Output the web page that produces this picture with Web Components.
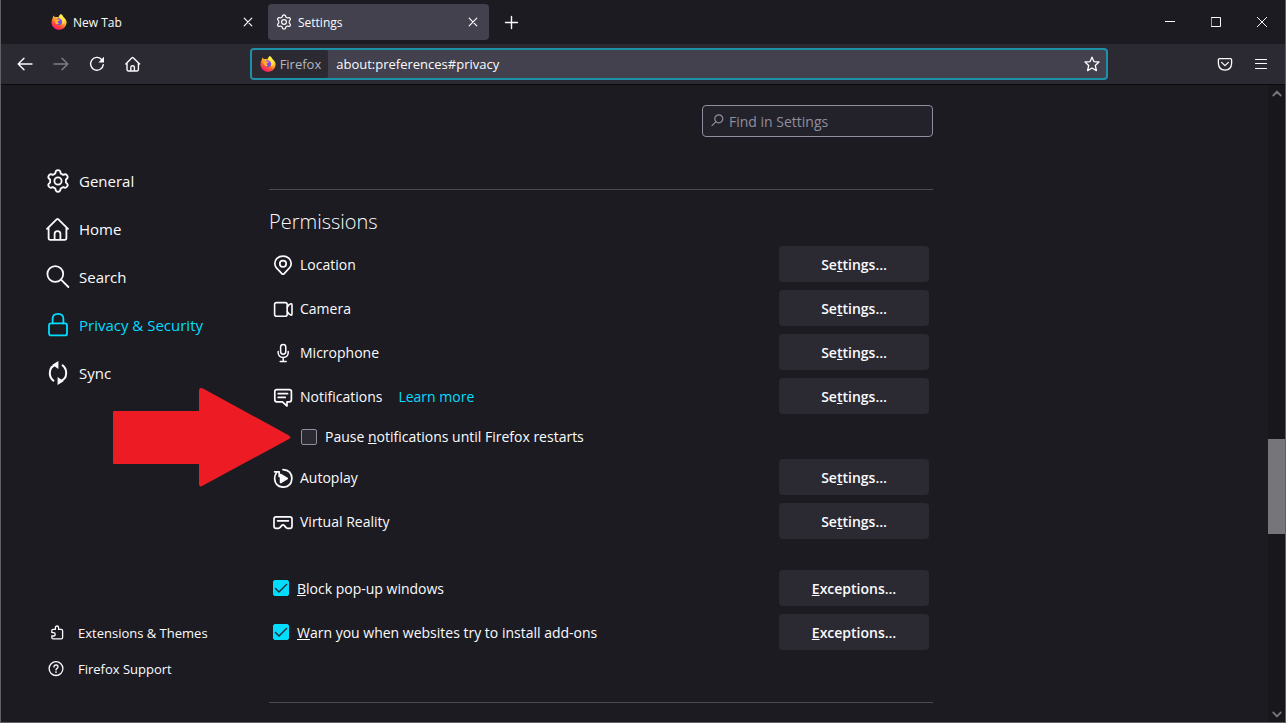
<!DOCTYPE html>
<html lang="en">
<head>
<meta charset="utf-8">
<title>Settings</title>
<style>
    html, body {
        height: 100%;
        margin: 0;
    }

    body {
        --bg: #1c1b22;
        --toolbar: #2b2a33;
        --raised: #42414d;
        --text: #fbfbfe;
        --accent: #00ddff;
        --line: #4b4a53;
        background: var(--bg);
        color: var(--text);
        font-family: "Open Sans", "Noto Sans", sans-serif;
        font-size: 14px;
        overflow: hidden;
    }
</style>
</head>
<body>
<browser-window>
    <tab-strip slot="tabs">
        <browser-tab icon="firefox">New Tab</browser-tab>
        <browser-tab icon="gear" selected>Settings</browser-tab>
    </tab-strip>
    <nav-toolbar slot="toolbar"></nav-toolbar>

    <settings-nav>
        <nav-item icon="gear">General</nav-item>
        <nav-item icon="home">Home</nav-item>
        <nav-item icon="search">Search</nav-item>
        <nav-item icon="lock" selected>Privacy &amp; Security</nav-item>
        <nav-item icon="sync">Sync</nav-item>
        <nav-item slot="footer" icon="puzzle" small>Extensions &amp; Themes</nav-item>
        <nav-item slot="footer" icon="help" small>Firefox Support</nav-item>
    </settings-nav>

    <settings-pane>
        <settings-group heading="Permissions">
            <permission-row icon="location">Location<span slot="action">Se<u>t</u>tings…</span></permission-row>
            <permission-row icon="camera">Camera<span slot="action">Se<u>t</u>tings…</span></permission-row>
            <permission-row icon="mic">Microphone<span slot="action">Se<u>t</u>tings…</span></permission-row>
            <permission-row icon="message" link="Learn more">Notifications<span slot="action">Se<u>t</u>tings…</span></permission-row>
            <check-row indent>
                <callout-arrow slot="callout"></callout-arrow>
                Pause <u>n</u>otifications until Firefox restarts
            </check-row>
            <permission-row icon="autoplay">Autoplay<span slot="action">Se<u>t</u>tings…</span></permission-row>
            <permission-row icon="vr">Virtual Reality<span slot="action">Se<u>t</u>tings…</span></permission-row>
        </settings-group>
        <settings-group>
            <check-row checked><u>B</u>lock pop-up windows<span slot="action"><u>E</u>xceptions…</span></check-row>
            <check-row checked><u>W</u>arn you when websites try to install add-ons<span slot="action"><u>E</u>xceptions…</span></check-row>
        </settings-group>
    </settings-pane>

    <page-scrollbar slot="scrollbar"></page-scrollbar>
</browser-window>

<script>
// Icons: [viewBox size, stroke width, markup]
const ICONS = {
    gear: [24, 1.8, '<path d="M9.3 4.5Q9.5 1.2 12 1.2Q14.5 1.2 14.7 4.5L17.1 5.9Q20 4.4 21.3 6.6Q22.6 8.8 19.9 10.6V13.4Q22.6 15.2 21.3 17.4Q20 19.6 17.1 18.1L14.7 19.5Q14.5 22.8 12 22.8Q9.5 22.8 9.3 19.5L6.9 18.1Q4 19.6 2.7 17.4Q1.4 15.2 4.1 13.4V10.6Q1.4 8.8 2.7 6.6Q4 4.4 6.9 5.9Z"/><circle cx="12" cy="12" r="3.6"/>'],
    home: [24, 1.8, '<path d="M1 11.8 10.6 2.3Q11.5 1.5 12.4 2.3L22 11.8M2.6 10.5V21Q2.6 22.8 4.4 22.8H18.6Q20.4 22.8 20.4 21V10.5M8.6 22.5V17Q8.6 14.2 11.5 14.2Q14.4 14.2 14.4 17V22.5"/>'],
    search: [24, 1.8, '<circle cx="9.3" cy="9" r="7.9"/><path d="M15 14.6 22.4 22"/>'],
    lock: [24, 1.8, '<rect x="3" y="10.400" width="18" height="12" rx="2"/><path d="M6.600 10.400V6Q6.600 .9 12 .9Q17.400 .9 17.400 6V10.400"/>'],
    sync: [24, 2, '<path d="M7.400 19.600Q3.800 16.800 3.800 12Q3.800 5 11 3.600M16.600 4.400Q20.200 7.200 20.200 12Q20.200 19 13 20.400"/><path fill="currentColor" stroke="none" d="M12.400 0V8L6.400 3.800ZM11.600 24V16L17.600 20.200Z"/>'],
    puzzle: [16, 1.3, '<path d="M5 4.400H7.400V2.800Q7.400 1 9 1Q10.600 1 10.600 2.800V4.400H13.200Q14.600 4.400 14.600 5.800V12.400Q14.600 13.800 13.200 13.800H5.200Q3.800 13.800 3.800 12.600V11H5.600Q7.200 11 7.200 9.200Q7.200 7.600 5.600 7.600H3.800V5.600Q3.800 4.400 5 4.400Z"/>'],
    help: [16, 1.3, '<circle cx="8" cy="7.600" r="6.900"/><path d="M6 6Q6 4 8 4Q10 4 10 5.800Q10 6.800 9 7.400Q8 8 8 9"/><circle cx="8" cy="11.100" r=".9" fill="currentColor" stroke="none"/>'],
    location: [20, 1.7, '<path d="M10 19.2Q9.2 19.2 8.6 18.4L3.4 12.8Q1.8 11 1.8 8.6Q1.8 5.4 4 3.3Q6.4 1.1 10 1.1Q13.6 1.1 16 3.3Q18.2 5.4 18.2 8.6Q18.2 11 16.6 12.8L11.4 18.4Q10.8 19.2 10 19.2Z"/><circle cx="10" cy="8.8" r="3.2"/>'],
    camera: [20, 1.6, '<rect x="1.6" y="3.6" width="12.6" height="13.6" rx="2"/><path d="M14.2 8.2 16.2 5.6Q18.9 3.6 19 6V15Q18.9 17.2 16.2 15.2L14.2 12.6"/>'],
    mic: [20, 1.5, '<rect x="7.6" y="1.6" width="5.2" height="9.6" rx="2.6"/><path d="M5.2 8.6V10Q5.6 14.4 10.2 14.4Q14.8 14.4 15.2 10V8.6M10.2 14.6V18.2M7.200 18.400H13.200"/>'],
    message: [20, 1.7, '<path d="M3.8 2.6H16.4Q18.4 2.6 18.4 4.6V12.8Q18.4 14.8 16.4 14.8H14V19L9.4 14.8H3.8Q1.8 14.8 1.8 12.8V4.6Q1.8 2.6 3.8 2.6Z"/><path d="M5.2 6.7H14.600M5.2 10.4H12.2"/>'],
    autoplay: [20, 1.7, '<path d="M10 1.6Q18.7 2.2 18.9 10.6Q18.3 18.8 10.2 19.2Q2 18.8 1.6 10.4Q1.6 7.4 3.4 5M1.6 3.8 6.2 3.8V8.4"/><path fill="currentColor" d="M7.6 6.6V14.4L14.2 10.5Z"/>'],
    vr: [20, 1.7, '<path d="M3.2 4.8H16.8Q19 4.8 19 7V14.2Q19 16.4 16.8 16.4H14.6Q13.6 16.4 13 15.6L11.4 13.6Q10 12.2 8.6 13.6L7 15.6Q6.4 16.4 5.4 16.4H3.2Q1 16.4 1 14.2V7Q1 4.8 3.2 4.8ZM4.6 8.8H15.4"/>'],
    back: [16, 1.4, '<path d="M15 8H1.2M7 2.2 1.2 8 7 13.8"/>'],
    forward: [16, 1.4, '<path d="M1 8H14.8M9 2.2 14.8 8 9 13.8"/>'],
    reload: [16, 1.4, '<path d="M14.3 8.6A6.4 6.4 0 1 1 12.6 3.4L14 4.8"/><path fill="currentColor" stroke="none" d="M15 .8V6.4H9.4Z"/>'],
    house: [16, 1.4, '<path d="M.8 8 7 1.700Q7.600 1.200 8.200 1.700L14.600 8M2 7V13.600Q2 15 3.200 15H12.200Q13.400 15 13.400 13.600V7M5.800 14.800V11.400Q5.800 9.800 7.600 9.800Q9.400 9.800 9.400 11.400V14.800"/>'],
    star: [16, 1.3, '<path d="M8 1.2 9.9 5.6 15 6 11.3 9.5 12.4 14.6 8 12 3.6 14.6 4.7 9.5 1 6 6.1 5.6Z"/>'],
    pocket: [16, 1.3, '<path d="M2.6 2.6H13.4Q14.6 2.6 14.6 3.8V7.6Q14.2 13.8 8 14.2Q1.8 13.8 1.4 7.6V3.8Q1.4 2.6 2.6 2.6ZM4.6 6.4 8 9.6 11.4 6.4"/>'],
    menu: [16, 1.2, '<path d="M2.500 3.500H13.500M2.500 7.500H13.500M2.500 12.500H13.500"/>'],
    close: [16, 1.2, '<path d="M4.2 4.2 11.8 11.8M11.8 4.2 4.2 11.8"/>'],
    plus: [16, 1.4, '<path d="M8.5 2.5V14.5M2.5 8.5H14.5"/>'],
    find: [16, 1.2, '<circle cx="9.800" cy="5.800" r="4"/><path d="M6.800 8.800 3 12.600"/>'],
    minimize: [10, 1, '<path d="M0 4.5H10"/>'],
    maximize: [10, 1, '<rect x=".5" y=".5" width="9" height="9"/>'],
    exit: [10, 1, '<path d="M.3.3 9.7 9.7M9.7.3.3 9.7"/>'],
    up: [10, 2, '<path d="M1.4 6.400 5 2.600 8.600 6.400"/>'],
    down: [10, 2, '<path d="M1.4 3.600 5 7.400 8.600 3.600"/>'],
    firefox: [32, 0, `
        <defs>
            <linearGradient id="flame" x1=".8" y1=".1" x2=".3" y2=".98">
                <stop offset="0" stop-color="#fff44f"/>
                <stop offset=".42" stop-color="#ffb02a"/>
                <stop offset=".68" stop-color="#ff5634"/>
                <stop offset="1" stop-color="#f5156c"/>
            </linearGradient>
            <linearGradient id="globe" x1=".7" y1="0" x2=".3" y2="1">
                <stop offset="0" stop-color="#a24bf0"/>
                <stop offset="1" stop-color="#5a4ad8"/>
            </linearGradient>
            <linearGradient id="head" x1="0" y1="0" x2="1" y2=".6">
                <stop offset="0" stop-color="#ff8a1e"/>
                <stop offset="1" stop-color="#ffc83a"/>
            </linearGradient>
        </defs>
        <path fill="url(#flame)" d="M19.5 0C23 2 24.4 4.6 25 7C27 7.6 28.4 9 29 10.6C30.8 12.8 31.4 15.6 31 18.4C30 26 23.6 31.4 16 31.4C7.6 31.4 1 25 1 16.8C1 13.4 1.8 10.4 3.4 8C3.6 6 4.6 4.4 6 3.2C6.2 4.8 6.8 5.8 7.6 6.4C10.4 5.6 12.6 5.8 14.6 6.8C15.6 4 17.2 1.6 19.5 0Z"/>
        <path fill="url(#globe)" d="M12 9.4C16 7.6 21.6 9.6 22.4 14.6C22.8 19.2 19.8 22 16 22C12 22 9.6 19 9.8 15.6Z"/>
        <path fill="url(#head)" d="M3.4 10.4C6.4 7.8 11 8.2 13 10.8L17.4 11.4C17.2 13.2 15.4 14 13.6 14.6C12.8 16.6 13.6 18.6 16.2 19.2C14.4 21.2 11.2 21 9.4 18.4C7.2 16 6.4 12.4 3.4 10.4Z"/>
        <path fill="#fff04a" opacity=".8" d="M19.5 1C17 4 16 6.6 18 8.8C21.6 10.4 24.4 14.6 22.6 21C28.4 17.6 28.6 11.4 25 7C24 4 22 2 19.5 1Z"/>`]
};

// html(host) gives the shadow markup, setup(host, root) runs once it is in place
function define(name, html, setup) {
    customElements.define(name, class extends HTMLElement {
        constructor() {
            super();
            this.attachShadow({ mode: 'open' });
        }

        connectedCallback() {
            const template = document.createElement('template');
            template.innerHTML = html(this);
            this.shadowRoot.replaceChildren(template.content.cloneNode(true));
            if (setup) {
                setup(this, this.shadowRoot);
            }
        }
    });
}

define('ui-icon', host => {
    const [size, stroke, markup] = ICONS[host.getAttribute('name')];
    return `
        <style>
            :host { display: block; flex: none; width: var(--icon-size, 16px); height: var(--icon-size, 16px); }
            svg { display: block; width: 100%; height: 100%; fill: none; stroke: currentColor; stroke-linecap: round; stroke-linejoin: round; }
        </style>
        <svg viewBox="0 0 ${size} ${size}" stroke-width="${stroke}" aria-hidden="true">${markup}</svg>
    `;
});

define('browser-window', () => `
    <style>
        :host {
            display: flex;
            flex-direction: column;
            height: 100vh;
            box-sizing: border-box;
            border: 1px solid #605f63;
            border-top: 0;
        }
        .page { flex: 1; min-height: 0; display: flex; }
        .content { flex: 1; min-width: 0; display: flex; overflow: hidden; }
    </style>
    <slot name="tabs"></slot>
    <slot name="toolbar"></slot>
    <div class="page">
        <div class="content"><slot></slot></div>
        <slot name="scrollbar"></slot>
    </div>
`);

define('tab-strip', () => `
    <style>
        :host { display: flex; align-items: center; height: 44px; flex: none; background: var(--bg); }
        .tabs { display: flex; gap: 4px; flex: 0 1 446px; min-width: 0; margin-left: 42px; }
        button { display: grid; place-items: center; border: 0; padding: 0; background: none; color: inherit; }
        .new { width: 44px; height: 36px; }
        .controls { display: flex; margin-left: auto; --icon-size: 10px; }
        .controls button { width: 46px; height: 44px; }
    </style>
    <div class="tabs" role="tablist"><slot></slot></div>
    <button class="new" aria-label="Open a new tab"><ui-icon name="plus"></ui-icon></button>
    <div class="controls">
        <button aria-label="Minimize"><ui-icon name="minimize"></ui-icon></button>
        <button aria-label="Maximize"><ui-icon name="maximize"></ui-icon></button>
        <button aria-label="Close window"><ui-icon name="exit"></ui-icon></button>
    </div>
`);

define('browser-tab', host => `
    <style>
        :host {
            display: flex;
            align-items: center;
            flex: 1;
            min-width: 0;
            height: 36px;
            box-sizing: border-box;
            padding: 0 8px;
            border-radius: 4px;
            font-size: 12px;
        }
        :host([selected]) { background: var(--raised); }
        .title { flex: 1; margin-left: 6px; white-space: nowrap; overflow: hidden; }
        button { border: 0; padding: 0; background: none; color: inherit; }
    </style>
    <ui-icon name="${host.getAttribute('icon')}"></ui-icon>
    <span class="title"><slot></slot></span>
    <button aria-label="Close tab"><ui-icon name="close"></ui-icon></button>
`, host => host.setAttribute('role', 'tab'));

define('nav-toolbar', () => `
    <style>
        :host {
            display: flex;
            align-items: center;
            height: 40px;
            flex: none;
            padding: 0 6px;
            background: var(--toolbar);
            border-bottom: 1px solid #0c0c0d;
        }
        button { display: grid; place-items: center; width: 36px; height: 32px; border: 0; padding: 0; background: none; color: inherit; }
        button:disabled { opacity: 0.4; }
        .spring { flex: 3; }
        .url {
            flex: 26;
            min-width: 0;
            display: flex;
            align-items: center;
            height: 32px;
            box-sizing: border-box;
            border: 2px solid #2090a8;
            border-radius: 4px;
            background: var(--raised);
            font-size: 13px;
        }
        .identity {
            display: flex;
            align-items: center;
            gap: 4px;
            height: 28px;
            padding: 0 7px 0 8px;
            border-radius: 2px;
            background: var(--toolbar);
            color: #b6b6be;
        }
        input { flex: 1; min-width: 0; border: 0; padding: 0 8px; background: none; color: inherit; font: inherit; outline: none; }
        .url button { width: 28px; height: 28px; }
    </style>
    <button aria-label="Back"><ui-icon name="back"></ui-icon></button>
    <button aria-label="Forward" disabled><ui-icon name="forward"></ui-icon></button>
    <button aria-label="Reload"><ui-icon name="reload"></ui-icon></button>
    <button aria-label="Home page"><ui-icon name="house"></ui-icon></button>
    <div class="spring"></div>
    <div class="url">
        <div class="identity"><ui-icon name="firefox"></ui-icon><span>Firefox</span></div>
        <input type="text" value="about:preferences#privacy" aria-label="Address">
        <button aria-label="Bookmark this page"><ui-icon name="star"></ui-icon></button>
    </div>
    <div class="spring"></div>
    <button aria-label="Save to Pocket"><ui-icon name="pocket"></ui-icon></button>
    <button aria-label="Application menu"><ui-icon name="menu"></ui-icon></button>
`);

define('settings-nav', () => `
    <style>
        :host { display: flex; flex: none; width: 240px; box-sizing: border-box; padding: 72px 0 35px; }
        nav { flex: 1; display: flex; flex-direction: column; }
        .footer { margin-top: auto; }
    </style>
    <nav>
        <slot></slot>
        <div class="footer"><slot name="footer"></slot></div>
    </nav>
`);

define('nav-item', host => `
    <style>
        :host { display: block; }
        a {
            display: flex;
            align-items: center;
            gap: 9px;
            height: 48px;
            padding-left: 45px;
            color: inherit;
            font-size: 15px;
            text-decoration: none;
            white-space: nowrap;
            --icon-size: 24px;
        }
        :host([selected]) a { color: var(--accent); }
        :host([small]) a { height: 36px; gap: 14px; padding-left: 47px; font-size: 13px; --icon-size: 16px; }
    </style>
    <a href="#"><ui-icon name="${host.getAttribute('icon')}"></ui-icon><span><slot></slot></span></a>
`);

define('settings-pane', () => `
    <style>
        :host { display: block; flex: 1; max-width: 664px; padding: 20px 28px 0; }
        form { display: flex; justify-content: flex-end; }
        .find {
            display: flex;
            align-items: center;
            gap: 4px;
            width: 231px;
            height: 32px;
            box-sizing: border-box;
            padding: 0 6px;
            border: 1px solid #8f8f9d;
            border-radius: 4px;
            background: #23222b;
            color: #8f8f9d;
        }
        input { flex: 1; min-width: 0; border: 0; padding: 0; background: none; color: var(--text); font: inherit; outline: none; }
        input::placeholder { color: #8f8f9d; opacity: 1; }
        hr { height: 1px; margin: 52px 0 0; border: 0; background: var(--line); }
    </style>
    <form role="search">
        <label class="find"><ui-icon name="find"></ui-icon><input type="text" placeholder="Find in Settings" aria-label="Find in Settings"></label>
    </form>
    <hr>
    <slot></slot>
    <hr>
`);

define('settings-group', host => `
    <style>
        :host { display: flex; flex-direction: column; gap: 8px; margin-top: 31px; }
        :host([heading]) { margin-top: 16px; }
        h2 { margin: 0; font-size: 20px; font-weight: 300; line-height: 32px; }
    </style>
    ${host.hasAttribute('heading') ? `<h2>${host.getAttribute('heading')}</h2>` : ''}
    <slot></slot>
`);

const ROW_STYLE = `
    :host { display: flex; align-items: center; padding: 0 4px; }
    button {
        width: 150px;
        height: 36px;
        margin-left: auto;
        border: 0;
        padding: 0;
        border-radius: 4px;
        background: var(--toolbar);
        color: inherit;
        font: inherit;
        font-weight: 600;
    }
`;

define('permission-row', host => `
    <style>
        ${ROW_STYLE}
        ui-icon { --icon-size: 20px; margin: 2px 7px 0 0; }
        a { margin-left: 16px; color: var(--accent); text-decoration: none; }
    </style>
    <ui-icon name="${host.getAttribute('icon')}"></ui-icon>
    <span id="label"><slot></slot></span>
    ${host.hasAttribute('link') ? `<a href="#">${host.getAttribute('link')}</a>` : ''}
    <button id="action" aria-labelledby="label action"><slot name="action"></slot></button>
`);

define('check-row', host => `
    <style>
        ${ROW_STYLE}
        :host([indent]) { position: relative; min-height: 29px; padding-left: 32px; }
        label { display: flex; align-items: center; gap: 8px; }
        input {
            appearance: none;
            width: 16px;
            height: 16px;
            margin: 0;
            border: 1px solid #8f8f9d;
            border-radius: 2px;
            background: var(--toolbar);
        }
        input:checked {
            border-color: var(--accent);
            background: var(--accent) url('data:image/svg+xml,<svg xmlns="http://www.w3.org/2000/svg" viewBox="0 0 14 14"><path d="M1 7 5 11 13 3" fill="none" stroke="%232b2a33" stroke-width="1.4"/></svg>') center / 14px;
        }
    </style>
    <slot name="callout"></slot>
    <label><input type="checkbox" ${host.hasAttribute('checked') ? 'checked' : ''}><span><slot></slot></span></label>
    ${host.querySelector('[slot="action"]') ? '<button><slot name="action"></slot></button>' : ''}
`);

// Points at the row it sits in, over the sidebar edge
define('callout-arrow', () => `
    <style>
        :host { position: absolute; right: 100%; top: 50%; width: 178px; height: 100px; transform: translate(22px, -50%); }
        svg { display: block; width: 100%; height: 100%; }
    </style>
    <svg viewBox="0 0 178 100" aria-hidden="true"><path fill="#ed1c24" d="M1 24H86V4Q86 0 90 1.5L176 48.5Q179 50.5 176 52L90 98.5Q86 101 86 97V77H1Q0 77 0 76V25Q0 24 1 24Z"/></svg>
`);

define('page-scrollbar', () => `
    <style>
        :host { display: flex; flex-direction: column; flex: none; width: 17px; background: #18171c; color: #76757a; --icon-size: 10px; }
        .end { display: grid; place-items: center; height: 17px; }
        .before { flex: 337; }
        .thumb { flex: 95; background: #76757a; }
        .after { flex: 171; }
    </style>
    <div class="end"><ui-icon name="up"></ui-icon></div>
    <div class="before"></div>
    <div class="thumb"></div>
    <div class="after"></div>
    <div class="end"><ui-icon name="down"></ui-icon></div>
`);
</script>
</body>
</html>
